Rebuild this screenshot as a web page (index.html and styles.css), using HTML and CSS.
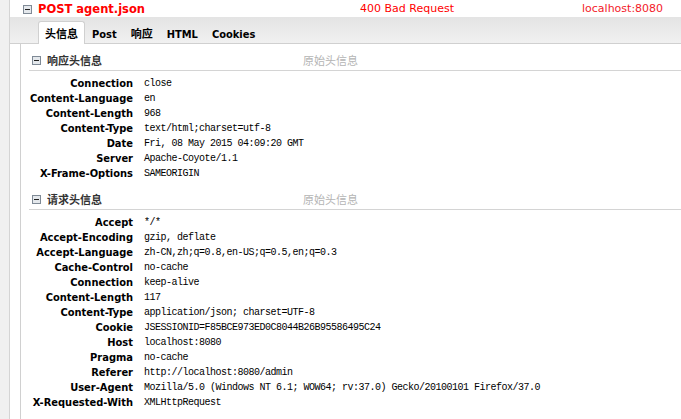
FILE: index.html
```html
<!DOCTYPE html>
<html lang="zh-CN">
<head>
<meta charset="utf-8">
<title>POST agent.json</title>
<link rel="stylesheet" href="styles.css">
</head>
<body>
<div class="main">
  <div class="reqrow">
    <svg class="toggle" width="9" height="9" viewBox="0 0 9 9"><rect x="0.5" y="0.5" width="8" height="8" fill="#e4e8ec" stroke="#7f8a96"/><rect x="2" y="4" width="5" height="1" fill="#202020"/></svg>
    <span class="req-title">POST agent.json</span>
    <span class="req-status">400 Bad Request</span>
    <span class="req-host">localhost:8080</span>
  </div>
  <div class="tabbar">
    <span class="tab active">头信息</span>
    <span class="tab">Post</span>
    <span class="tab">响应</span>
    <span class="tab">HTML</span>
    <span class="tab">Cookies</span>
  </div>
  <div class="panel">
    <div class="section">
      <div class="sec-head">
        <svg class="toggle" width="9" height="9" viewBox="0 0 9 9"><rect x="0.5" y="0.5" width="8" height="8" fill="#e4e8ec" stroke="#7f8a96"/><rect x="2" y="4" width="5" height="1" fill="#202020"/></svg>
        <span class="sec-title">响应头信息</span>
        <span class="sec-raw">原始头信息</span>
      </div>
      <div class="rows">
        <div class="k">Connection</div><div class="v">close</div>
        <div class="k">Content-Language</div><div class="v">en</div>
        <div class="k">Content-Length</div><div class="v">968</div>
        <div class="k">Content-Type</div><div class="v">text/html;charset=utf-8</div>
        <div class="k">Date</div><div class="v">Fri, 08 May 2015 04:09:20 GMT</div>
        <div class="k">Server</div><div class="v">Apache-Coyote/1.1</div>
        <div class="k">X-Frame-Options</div><div class="v">SAMEORIGIN</div>
      </div>
    </div>
    <div class="section">
      <div class="sec-head">
        <svg class="toggle" width="9" height="9" viewBox="0 0 9 9"><rect x="0.5" y="0.5" width="8" height="8" fill="#e4e8ec" stroke="#7f8a96"/><rect x="2" y="4" width="5" height="1" fill="#202020"/></svg>
        <span class="sec-title">请求头信息</span>
        <span class="sec-raw">原始头信息</span>
      </div>
      <div class="rows">
        <div class="k">Accept</div><div class="v">*/*</div>
        <div class="k">Accept-Encoding</div><div class="v">gzip, deflate</div>
        <div class="k">Accept-Language</div><div class="v">zh-CN,zh;q=0.8,en-US;q=0.5,en;q=0.3</div>
        <div class="k">Cache-Control</div><div class="v">no-cache</div>
        <div class="k">Connection</div><div class="v">keep-alive</div>
        <div class="k">Content-Length</div><div class="v">117</div>
        <div class="k">Content-Type</div><div class="v">application/json; charset=UTF-8</div>
        <div class="k">Cookie</div><div class="v">JSESSIONID=F85BCE973ED0C8044B26B95586495C24</div>
        <div class="k">Host</div><div class="v">localhost:8080</div>
        <div class="k">Pragma</div><div class="v">no-cache</div>
        <div class="k">Referer</div><div class="v">http://localhost:8080/admin</div>
        <div class="k">User-Agent</div><div class="v">Mozilla/5.0 (Windows NT 6.1; WOW64; rv:37.0) Gecko/20100101 Firefox/37.0</div>
        <div class="k">X-Requested-With</div><div class="v">XMLHttpRequest</div>
      </div>
    </div>
  </div>
</div>
</body>
</html>
```
FILE: styles.css
```css
html, body {
  margin: 0;
  padding: 0;
  height: 100%;
}
body {
  background: #f0f0f0;
  padding-left: 9px;
  box-sizing: border-box;
  font-family: "DejaVu Sans", "Noto Sans CJK SC", sans-serif;
  overflow: hidden;
}
.main {
  background: #fff;
  border-left: 1px solid #d4d4d4;
  height: 100%;
  display: flex;
  flex-direction: column;
}
.reqrow {
  height: 17px;
  display: grid;
  grid-template-columns: 13px 9px 6px 323px 221px 1fr;
  align-items: center;
  font-size: 11px;
  color: #ff0000;
}
.reqrow .toggle { grid-column: 2; margin-top: 1px; }
.req-title { grid-column: 4; font-weight: bold; font-size: 11.5px; }
.req-status { grid-column: 5; margin-left: -1px; }
.req-host { grid-column: 6; color: #f31a2a; }
.toggle { display: block; }
.tabbar {
  height: 26px;
  background: linear-gradient(#e4e4e4, #f1f1f1);
  border-bottom: 1px solid #d0d0d0;
  display: flex;
  align-items: flex-end;
  padding-left: 28px;
}
.tab {
  font-family: "DejaVu Sans Condensed", "DejaVu Sans", "Noto Sans CJK SC", sans-serif;
  font-size: 11px;
  font-weight: bold;
  color: #000;
  padding: 0 6px;
  height: 21px;
  line-height: 24px;
  margin-bottom: -1px;
  border: 1px solid transparent;
  border-bottom: none;
}
.tab.active {
  background: #fff;
  border-color: #d0d0d0;
  border-radius: 3px 3px 0 0;
  height: 22px;
  line-height: 23px;
  font-family: "Noto Sans CJK SC", sans-serif;
  font-size: 11px;
  padding: 0 6px;
}
.panel {
  flex: 1;
  margin-left: 10px;
  border-left: 1px solid #d0d0d0;
  padding-top: 6px;
  padding-left: 8px;
}
.section + .section { margin-top: 8px; }
.sec-head {
  height: 20px;
  border-bottom: 1px solid #d4d4d4;
  display: grid;
  grid-template-columns: 3px 9px 6px 256px 1fr;
  align-items: center;
}
.sec-head .toggle { grid-column: 2; }
.sec-title {
  grid-column: 4;
  font-family: "Noto Sans CJK SC", sans-serif;
  font-size: 11px;
  font-weight: bold;
  color: #333;
}
.sec-raw {
  grid-column: 5;
  font-family: "Noto Sans CJK SC", sans-serif;
  font-size: 11px;
  color: #b4b4b4;
}
.rows {
  display: grid;
  grid-template-columns: 104px 1fr;
  column-gap: 11px;
  padding-top: 5px;
  line-height: 15px;
}
.k {
  text-align: right;
  font-family: "DejaVu Sans Condensed", "DejaVu Sans", sans-serif;
  font-weight: bold;
  font-size: 11px;
  color: #000;
  white-space: nowrap;
}
.v {
  font-family: "Liberation Mono", monospace;
  font-size: 10px;
  letter-spacing: -0.5px;
  color: #000;
  white-space: nowrap;
}
```
